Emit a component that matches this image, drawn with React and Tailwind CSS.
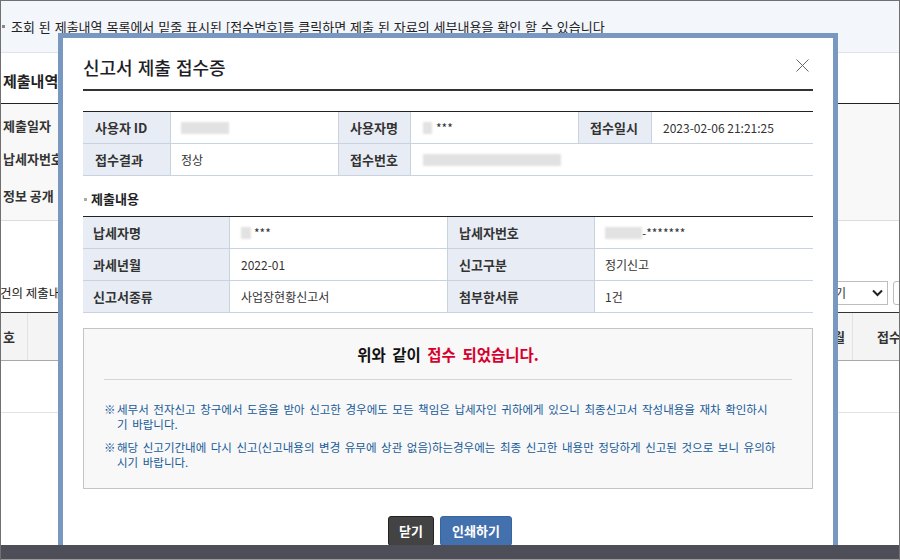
import React from "react";

const F = "font-['Noto_Sans_CJK_KR','Noto_Sans',sans-serif]";

function Blur({ w }) {
  return <span className={`inline-block h-[12px] bg-[#e2e2e2] blur-[1px] align-middle`} style={{ width: w }} />;
}

function L({ children, pl = "pl-[12px]", last }) {
  return (
    <div className={`h-[32px] flex items-center ${pl} bg-[#e8edf5] border-b border-[#c9d3df] ${last ? "" : "border-r"} text-[13px] font-bold text-[#333] whitespace-nowrap`}>
      {children}
    </div>
  );
}
function V({ children, pl = "pl-[10px]", last, span }) {
  return (
    <div className={`h-[32px] flex items-center ${pl} bg-white border-b border-[#c9d3df] ${last ? "" : "border-r"} ${span || ""} text-[12px] text-[#333] whitespace-nowrap`}>
      {children}
    </div>
  );
}

export default function App() {
  return (
    <div className={`relative w-[900px] h-[560px] overflow-hidden bg-white flex flex-col ${F} border-x border-t border-[#707070]`}>
      <div className="relative flex-1 overflow-hidden">
        {/* background page */}
        <div className="h-[52px] bg-[#f3f6fb] border-b border-[#dce3ee] flex items-center">
          <span className="w-[3px] h-[3px] bg-[#888] ml-[1px]" />
          <span className="ml-[6px] text-[13px] text-[#222] whitespace-nowrap [word-spacing:1px]">
            조회 된 제출내역 목록에서 밑줄 표시된 [접수번호]를 클릭하면 제출 된 자료의 세부내용을 확인 할 수 있습니다
          </span>
        </div>
        <div className="h-[51px] border-b border-[#222] pt-[19px] pl-[2px]">
          <div className="text-[15px] leading-[18px] font-bold text-[#222]">제출내역</div>
        </div>
        <div className="h-[117px] bg-[#f8f8f8] border-b border-[#dcdcdc] pt-[13px] pl-[2px] text-[13px] leading-[18px] font-bold text-[#333]">
          <div>제출일자</div>
          <div className="mt-[15px]">납세자번호</div>
          <div className="mt-[19px]">정보 공개</div>
        </div>
        <div className="mt-[60px] h-[24px] flex items-center">
          <span className="text-[12.5px] text-[#222] whitespace-nowrap -ml-[1px]">건의 제출내역</span>
          <div className="ml-auto flex items-center gap-[5px] -mr-[24px]">
            <div className="w-[110px] h-[24px] border border-[#bdbdbd] bg-white flex items-center justify-end pr-[4px] text-[12px] text-[#333] overflow-hidden">
              <span className="whitespace-nowrap">목록 보기</span>
              <svg width="11" height="8" viewBox="0 0 11 8" className="ml-[26px] shrink-0"><path d="M1 1.5 L5.5 6 L10 1.5" stroke="#222" strokeWidth="2" fill="none" /></svg>
            </div>
            <div className="w-[30px] h-[24px] border border-[#bdbdbd] rounded-[3px] bg-white" />
          </div>
        </div>
        <div className="mt-[7px] border-t border-[#333] h-[49px] bg-[#f4f4f4] border-b border-b-[#a8a8a8] flex text-[13px] font-bold text-[#333]">
          <div className="w-[27px] border-r border-[#e2e2e2] flex items-center pl-[2px]">호</div>
          <div className="flex-1 border-r border-[#e2e2e2] flex items-center justify-end pr-[7px]">년월</div>
          <div className="w-[46px] flex items-center pl-[24px] whitespace-nowrap overflow-hidden">접수</div>
        </div>
        <div className="h-[52px] border-b border-[#e3e3e3]" />

        {/* modal */}
        <div className="absolute left-[57px] top-[32px] w-[780px] h-[560px] border-[5px] border-[#7898c1] bg-white px-[20px]">
          <div className="pt-[16px] pb-[9px] border-b-2 border-[#333] flex items-center justify-between pr-[4px]">
            <div className="text-[18px] leading-[26px] font-medium text-[#1f1f2a] [word-spacing:1px]">신고서 제출 접수증</div>
            <svg width="13" height="13" viewBox="0 0 13 13" className="-mt-[4px]">
              <path d="M0.5 0.5 L12.5 12.5 M12.5 0.5 L0.5 12.5" stroke="#666" strokeWidth="1" fill="none" />
            </svg>
          </div>

          <div className="mt-[20px] border-t border-[#222] grid grid-cols-[88px_168px_72px_168px_73px_161px]">
            <L>사용자 ID</L>
            <V><Blur w={48} /></V>
            <L pl="pl-[11px]">사용자명</L>
            <V pl="pl-[12px]"><Blur w={9} /><span className="ml-[4px]">***</span></V>
            <L pl="pl-[11px]">접수일시</L>
            <V pl="pl-[11px]" last>2023-02-06 21:21:25</V>
            <L>접수결과</L>
            <V>정상</V>
            <L pl="pl-[11px]">접수번호</L>
            <V pl="pl-[12px]" last span="col-span-3"><Blur w={138} /></V>
          </div>

          <div className="mt-[14px] flex items-center text-[13px] leading-[18px] font-bold text-[#222]">
            <span className="w-[3px] h-[3px] bg-[#aaa] ml-[1px]" />
            <span className="ml-[4px]">제출내용</span>
          </div>

          <div className="mt-[8px] border-t border-[#222] grid grid-cols-[147px_218px_147px_218px]">
            <L pl="pl-[10px]">납세자명</L>
            <V pl="pl-[11px]"><Blur w={10} /><span className="ml-[3px]">***</span></V>
            <L pl="pl-[11px]">납세자번호</L>
            <V pl="pl-[10px]" last><Blur w={37} /><span>-*******</span></V>
            <L pl="pl-[10px]">과세년월</L>
            <V pl="pl-[11px]">2022-01</V>
            <L pl="pl-[11px]">신고구분</L>
            <V pl="pl-[10px]" last>정기신고</V>
            <L pl="pl-[10px]">신고서종류</L>
            <V pl="pl-[11px]">사업장현황신고서</V>
            <L pl="pl-[11px]">첨부한서류</L>
            <V pl="pl-[10px]" last>1건</V>
          </div>

          <div className="mt-[15px] border border-[#c4c4c4] bg-[#f8f8f8] pt-[15px] pb-[18px]">
            <div className="text-center text-[15.5px] leading-[20px] font-bold text-[#111] [word-spacing:3px]">
              위와 같이 <span className="text-[#d6002f]">접수 되었습니다.</span>
            </div>
            <div className="mx-[20px] mt-[15px] border-t border-[#d5d5d5]" />
            <div className="px-[20px] mt-[22px] text-[11.5px] leading-[15px] text-[#175a98] [word-spacing:2px]">
              <div className="flex">
                <span className="w-[13px] shrink-0">※</span>
                <div className="whitespace-nowrap">
                  세무서 전자신고 창구에서 도움을 받아 신고한 경우에도 모든 책임은 납세자인 귀하에게 있으니 최종신고서 작성내용을 재차 확인하시
                  <br />기 바랍니다.
                </div>
              </div>
              <div className="flex mt-[8px]">
                <span className="w-[13px] shrink-0">※</span>
                <div className="whitespace-nowrap">
                  해당 신고기간내에 다시 신고(신고내용의 변경 유무에 상관 없음)하는경우에는 최종 신고한 내용만 정당하게 신고된 것으로 보니 유의하
                  <br />시기 바랍니다.
                </div>
              </div>
            </div>
          </div>

          <div className="mt-[27px] flex justify-center gap-[6px] pl-[4px]">
            <button className="w-[46px] h-[30px] rounded-[3px] bg-[#434343] border border-[#222] text-white text-[13px] font-bold">닫기</button>
            <button className="w-[72px] h-[30px] rounded-[3px] bg-[#4371ad] border border-[#3a64a0] text-white text-[13px] font-bold">인쇄하기</button>
          </div>
        </div>
      </div>
      <div className="h-[15px] bg-[#4d4e58] border-b border-[#9a9a9a] shrink-0" />
    </div>
  );
}
